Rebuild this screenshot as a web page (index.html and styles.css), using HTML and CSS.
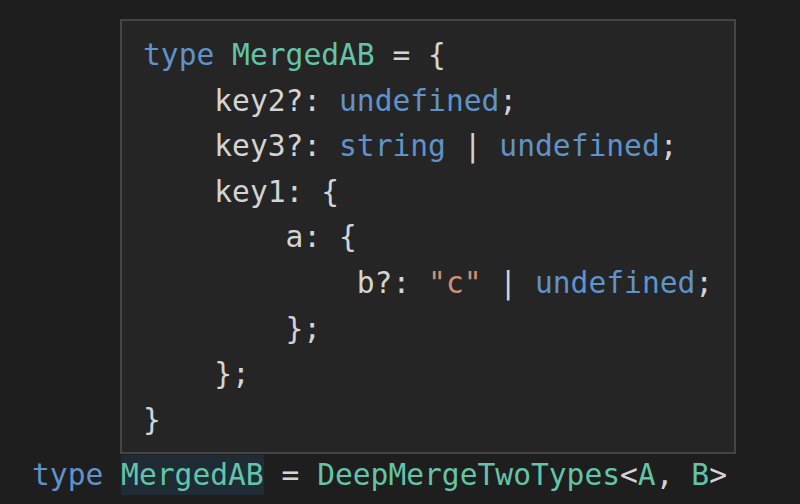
FILE: index.html
```html
<!DOCTYPE html>
<html>
<head>
<meta charset="utf-8">
<link rel="stylesheet" href="styles.css">
</head>
<body>
<div class="editor">
  <div class="line"><span class="kw">type</span> <span class="sel"><span class="ty">MergedAB</span></span> <span class="op">=</span> <span class="ty">DeepMergeTwoTypes</span><span class="op">&lt;</span><span class="ty">A</span><span class="op">,</span> <span class="ty">B</span><span class="op">&gt;</span></div>
</div>
<div class="hover">
<pre class="code"><span class="kw">type</span> <span class="ty">MergedAB</span> = {
    key2?: <span class="kw">undefined</span>;
    key3?: <span class="kw">string</span> | <span class="kw">undefined</span>;
    key1: {
        a: {
            b?: <span class="str">"c"</span> | <span class="kw">undefined</span>;
        };
    };
}</pre>
</div>
</body>
</html>
```
FILE: styles.css
```css
html, body {
  margin: 0;
  padding: 0;
  background: #1e1e1e;
  width: 800px;
  height: 504px;
  overflow: hidden;
}
body {
  font-family: "DejaVu Sans Mono", monospace;
  font-size: 29.6px;
  color: #d4d4d4;
  position: relative;
}
.editor {
  padding-top: 455px;
}
.line {
  padding-left: 32px;
  height: 40px;
  line-height: 40px;
  white-space: pre;
}
.sel {
  display: inline-block;
  background: #1f2b35;
  height: 40px;
}
.kw { color: #5f93c9; }
.ty { color: #63c4a8; }
.str { color: #ce9178; }
.op { color: #d4d4d4; }
.hover {
  position: absolute;
  left: 120px;
  top: 19px;
  width: 612px;
  height: 431px;
  border: 2px solid #454545;
  background: #252526;
  box-sizing: content-box;
}
.code {
  margin: 0;
  padding: 12px 0 0 21px;
  font-family: "DejaVu Sans Mono", monospace;
  font-size: 29.6px;
  line-height: 45.6px;
  color: #d4d4d4;
}
```
